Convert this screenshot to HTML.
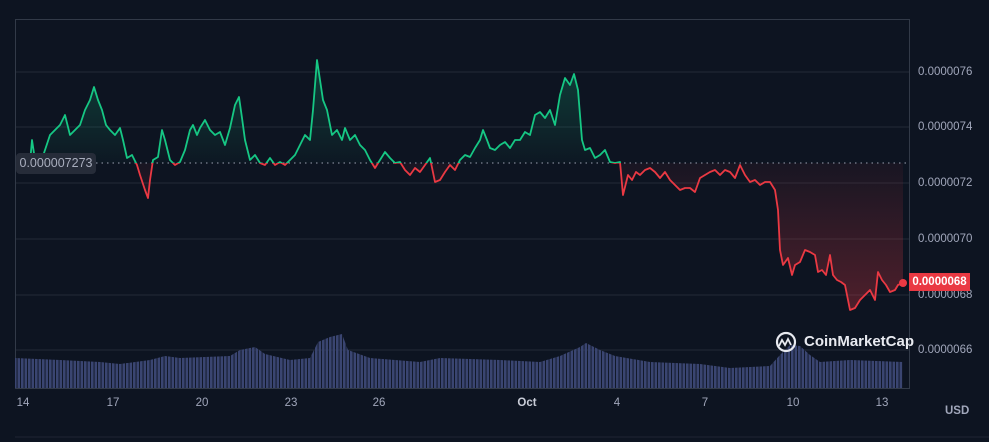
<!DOCTYPE html>
<html><head><meta charset="utf-8"><style>
html,body{margin:0;padding:0;background:#0d1421;width:989px;height:442px;overflow:hidden;font-family:"Liberation Sans",sans-serif}
.r{position:absolute;left:918px;color:#a1a7bb;font-size:11.5px}
.x{position:absolute;top:397px;color:#a1a7bb;font-size:11.5px;transform:translateX(-50%)}
</style></head><body>
<svg width="989" height="442" style="position:absolute;left:0;top:0">
<defs>
<clipPath id="up"><rect x="0" y="0" width="989" height="163"/></clipPath>
<clipPath id="dn"><rect x="0" y="163" width="989" height="300"/></clipPath>
<linearGradient id="gg" x1="0" y1="60" x2="0" y2="163" gradientUnits="userSpaceOnUse"><stop offset="0" stop-color="#16c784" stop-opacity="0.25"/><stop offset="1" stop-color="#16c784" stop-opacity="0.02"/></linearGradient>
<linearGradient id="rg" x1="0" y1="163" x2="0" y2="310" gradientUnits="userSpaceOnUse"><stop offset="0" stop-color="#ea3943" stop-opacity="0.05"/><stop offset="1" stop-color="#ea3943" stop-opacity="0.3"/></linearGradient>
<pattern id="vb" width="3.5" height="10" patternUnits="userSpaceOnUse"><rect width="2.6" height="10" fill="#3a4571"/></pattern>
<polyline id="pl" points="30,163 32,140 35,160 40,165 45,150 50,135 55,130 60,125 65,115 70,135 75,130 80,125 85,110 90,100 94,87 98,100 102,110 106,125 110,130 115,135 120,128 123,140 127,158 132,155 137,165 140,175 145,190 148,198 150,180 153,160 158,157 162,130 165,140 170,160 175,165 180,162 185,150 190,130 193,125 197,135 200,128 205,120 210,130 215,135 220,132 225,145 230,128 235,105 239,97 242,118 245,140 250,160 255,155 260,163 265,165 270,158 275,165 280,162 285,165 290,160 295,155 300,145 305,135 310,140 313,110 317,60 320,80 323,100 327,110 332,135 337,130 342,140 345,128 350,140 355,135 360,145 365,150 370,160 375,168 380,160 385,152 390,158 395,163 400,162 405,170 410,175 415,168 420,172 425,165 430,158 435,182 440,180 445,172 450,165 455,170 460,160 465,155 470,157 475,148 480,140 483,130 487,140 490,148 495,150 500,145 505,142 510,148 515,140 520,140 525,132 530,135 535,115 540,112 545,118 550,110 555,125 560,95 565,78 570,85 574,74 578,90 582,140 585,150 590,148 595,158 600,155 605,150 610,162 615,163 620,162 623,195 628,175 632,180 636,172 640,175 645,170 650,168 655,172 660,178 665,172 670,180 675,185 680,190 685,188 690,188 695,192 700,178 705,175 710,172 715,170 720,175 725,170 730,172 735,178 740,165 745,175 750,182 755,180 760,185 765,182 770,182 775,190 778,210 780,250 783,265 788,258 792,275 795,265 800,262 805,250 810,252 815,255 818,272 822,270 826,275 830,255 833,275 837,280 841,282 845,285 850,310 855,308 860,300 865,295 870,290 875,300 878,272 882,280 886,285 890,292 895,290 898,285 903,283"/>
<polygon id="pf" points="30,163 32,140 35,160 40,165 45,150 50,135 55,130 60,125 65,115 70,135 75,130 80,125 85,110 90,100 94,87 98,100 102,110 106,125 110,130 115,135 120,128 123,140 127,158 132,155 137,165 140,175 145,190 148,198 150,180 153,160 158,157 162,130 165,140 170,160 175,165 180,162 185,150 190,130 193,125 197,135 200,128 205,120 210,130 215,135 220,132 225,145 230,128 235,105 239,97 242,118 245,140 250,160 255,155 260,163 265,165 270,158 275,165 280,162 285,165 290,160 295,155 300,145 305,135 310,140 313,110 317,60 320,80 323,100 327,110 332,135 337,130 342,140 345,128 350,140 355,135 360,145 365,150 370,160 375,168 380,160 385,152 390,158 395,163 400,162 405,170 410,175 415,168 420,172 425,165 430,158 435,182 440,180 445,172 450,165 455,170 460,160 465,155 470,157 475,148 480,140 483,130 487,140 490,148 495,150 500,145 505,142 510,148 515,140 520,140 525,132 530,135 535,115 540,112 545,118 550,110 555,125 560,95 565,78 570,85 574,74 578,90 582,140 585,150 590,148 595,158 600,155 605,150 610,162 615,163 620,162 623,195 628,175 632,180 636,172 640,175 645,170 650,168 655,172 660,178 665,172 670,180 675,185 680,190 685,188 690,188 695,192 700,178 705,175 710,172 715,170 720,175 725,170 730,172 735,178 740,165 745,175 750,182 755,180 760,185 765,182 770,182 775,190 778,210 780,250 783,265 788,258 792,275 795,265 800,262 805,250 810,252 815,255 818,272 822,270 826,275 830,255 833,275 837,280 841,282 845,285 850,310 855,308 860,300 865,295 870,290 875,300 878,272 882,280 886,285 890,292 895,290 898,285 903,283 903,163"/>
</defs>
<g stroke="#222a38" stroke-width="1">
<line x1="15" y1="72" x2="909" y2="72"/><line x1="15" y1="127" x2="909" y2="127"/><line x1="15" y1="183" x2="909" y2="183"/><line x1="15" y1="239" x2="909" y2="239"/><line x1="15" y1="295" x2="909" y2="295"/><line x1="15" y1="350" x2="909" y2="350"/>
</g>
<path d="M15.5 19.5H909.5V388.5H15.5Z" fill="none" stroke="#323a48"/>
<polygon fill="url(#vb)" points="15,358 60,360 100,362 120,364 150,360 165,356 180,358 230,356 240,350 255,347 265,354 290,360 310,358 318,342 330,337 342,334 348,350 370,358 420,362 440,358 500,360 540,362 560,356 580,347 586,343 600,350 615,356 650,362 700,364 730,368 770,366 780,355 790,345 800,346 810,355 820,362 850,360 903,362 903,388 15,388"/>
<use href="#pf" fill="url(#gg)" stroke="none" clip-path="url(#up)"/>
<use href="#pf" fill="url(#rg)" stroke="none" clip-path="url(#dn)"/>
<line x1="96" y1="163" x2="909" y2="163" stroke="#9aa0b0" stroke-width="1" stroke-dasharray="1.5,4"/>
<g clip-path="url(#up)"><use href="#pl" fill="none" stroke="#16c784" stroke-width="1.8" stroke-linejoin="round"/></g>
<g clip-path="url(#dn)"><use href="#pl" fill="none" stroke="#ea3943" stroke-width="1.8" stroke-linejoin="round"/></g>
<circle cx="903" cy="283" r="4" fill="#ea3943"/>
<g fill="none" stroke="#e8eaf0" stroke-width="2.2"><circle cx="786" cy="342" r="9"/><path d="M779 346 l3 -6 l3 5 l3 -6 l3 6" stroke-width="1.8"/></g>
<line x1="15" y1="437" x2="989" y2="437" stroke="#1e2533"/>
</svg>
<div style="position:absolute;left:16px;top:153px;width:80px;height:21px;background:#262c39;border-radius:4px;color:#a9aebe;font-size:12.5px;line-height:21px;text-align:center">0.000007273</div>
<div style="position:absolute;left:804px;top:333px;color:#e8eaf0;font-size:15px;font-weight:bold">CoinMarketCap</div>
<div class="r" style="top:66px">0.0000076</div>
<div class="r" style="top:121px">0.0000074</div>
<div class="r" style="top:177px">0.0000072</div>
<div class="r" style="top:233px">0.0000070</div>
<div class="r" style="top:289px">0.0000068</div>
<div class="r" style="top:344px">0.0000066</div>
<div style="position:absolute;left:909px;top:273px;width:61px;height:18px;background:#ea3943;color:#fff;font-size:11.5px;font-weight:bold;line-height:18px;text-align:center">0.0000068</div>
<div class="x" style="left:23px">14</div><div class="x" style="left:113px">17</div><div class="x" style="left:202px">20</div><div class="x" style="left:291px">23</div><div class="x" style="left:379px">26</div><div class="x" style="left:527px;color:#c9cdd8;font-weight:bold">Oct</div><div class="x" style="left:617px">4</div><div class="x" style="left:705px">7</div><div class="x" style="left:793px">10</div><div class="x" style="left:882px">13</div>
<div style="position:absolute;left:945px;top:405px;color:#a1a7bb;font-size:11.5px;font-weight:bold">USD</div>
</body></html>
